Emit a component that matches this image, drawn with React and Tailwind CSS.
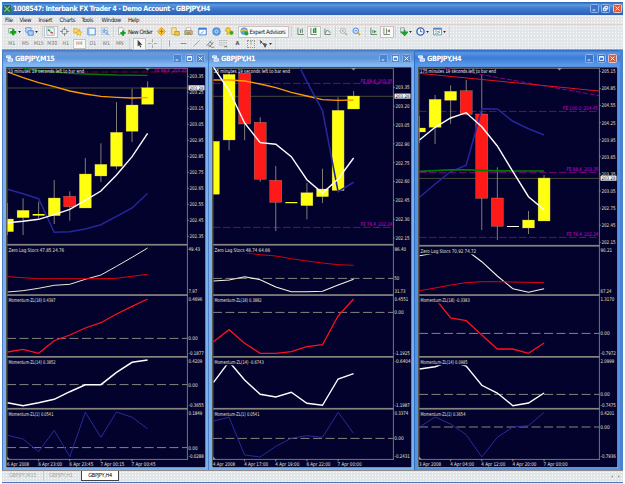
import React from 'react';

const STEP = 15.57;
const barX = (i) => 1.5 + i * STEP;

// candle: [high, low, bodyTop, bodyBottom, color]
const Y = '#ffff10';
const R = '#ff1a1a';
const W = '#ffffff';

const charts = [
  {
    title: 'GBPJPY,M15',
    active: false,
    timer: '10 minutes 19 seconds left to bar end',
    price: 88,
    ticks: ['203.35', '203.25', '203.15', '203.05', '202.95', '202.85', '202.75', '202.65', '202.55', '202.45', '202.35'],
    tickStart: 76.3,
    tickStep: 16,
    dividers: [244.7, 295, 356.8, 408.7],
    levels: [{ y: 72, label: 'FE 88.6_203.35', labelY: 70, from: 75, color: '#9a0010' }],
    candles: [
      [203, 235, 219, 231.7, Y], [198.3, 235, 210.3, 217.7, Y], [201.7, 218.3, 214, 215.6, Y],
      [180, 224, 198, 215.7, Y], [191.3, 220.7, 196.3, 206.7, R], [158, 208, 174, 208, Y],
      [143.3, 182, 164.3, 176, Y], [102, 169.3, 132.3, 166.3, Y], [88.7, 142, 105, 131.3, Y],
      [81.3, 104.3, 87.7, 104.3, Y],
    ],
    lines: [
      { color: '#007800', width: 1.3, pts: [[1, 68.3], [2, 70.5], [4, 73.3], [5, 74], [7, 75], [9, 75.3]] },
      { color: '#ff9a00', width: 1.3, ys: [72, 77.7, 82.7, 86.7, 91, 94, 96.3, 97.3, 98, 97.7] },
      { color: '#26269a', width: 1.5, ys: [189.3, 193.7, 198.7, 232.3, 231.7, 229, 224.7, 216.3, 208, 193.3] },
      { color: '#ffffff', width: 1.4, ys: [222.7, 221.3, 219.3, 214.7, 209.3, 200.3, 191, 175, 156.7, 133.3] },
    ],
    panels: [
      {
        label: 'Zero Lag Stocs 47.85 24.76', y: 250.3, hi: ['49.43', 249], lo: ['7.97', 291],
        lines: [
          { color: '#e9e9d6', width: 1, ys: [292, 290.7, 288.3, 285.3, 284.3, 279.3, 275, 266.3, 257.3, 248] },
          { color: '#e00010', width: 1, ys: [276.7, 277.7, 278.7, 278.7, 278.7, 278.7, 278.7, 278.3, 276.3, 274.3] },
        ],
      },
      {
        label: 'Momentum-ZL(18) 0.4397', y: 300.3, hi: ['0.4696', 298.7], lo: ['-0.1877', 353.5], zero: 338.4,
        lines: [{ color: '#ff1020', width: 1.3, ys: [352, 349.3, 353.3, 340.7, 335, 328, 322.7, 314, 306.3, 299] }],
      },
      {
        label: 'Momentum-ZL(14) 0.3852', y: 362.3, hi: ['0.4209', 361], lo: ['-0.3655', 405], zero: 384.6,
        lines: [{ color: '#ffffff', width: 1.5, ys: [402.7, 405.7, 402.7, 399.3, 391.7, 384.7, 384.7, 372.3, 362.3, 360] }],
      },
      {
        label: 'Momentum-ZL(1) 0.0541', y: 413.8, hi: ['0.1849', 412.7], lo: ['-0.0288', 456.5], zero: 447.6,
        lines: [{ color: '#2a2a9c', width: 1, ys: [435.3, 439, 451.7, 430.3, 456.7, 412.3, 437.3, 412, 417.3, 428.7] }],
      },
    ],
    times: ['6 Apr 2008', '6 Apr 23:00', '6 Apr 23:45', '7 Apr 00:15', '7 Apr 00:45'],
  },
  {
    title: 'GBPJPY,H1',
    active: false,
    timer: '25 minutes 19 seconds left to bar end',
    price: 96.3,
    ticks: ['203.35', '203.20', '203.05', '202.90', '202.75', '202.60', '202.45', '202.30', '202.15'],
    tickStart: 87.3,
    tickStep: 18.83,
    dividers: [244.7, 295, 356.8, 408.7],
    levels: [
      { y: 83.4, label: 'FE 88.6_203.35', labelY: 81, from: 1, color: '#8a008a' },
      { y: 227.4, label: 'FE 76.4_202.24', labelY: 224.4, from: 1, color: '#8a008a' },
    ],
    candles: [
      [141, 194, 141.3, 194.3, Y], [72, 150.3, 74.3, 140, Y], [73, 140.3, 73.3, 124, R],
      [117.3, 181.7, 122.3, 179.3, R], [166, 231, 180.3, 202.3, R], [202, 203, 202, 203.2, Y],
      [183, 219.3, 192.7, 205.7, Y], [168.7, 203, 189, 196.7, Y], [97.3, 191, 110.3, 190.5, Y],
      [91, 109, 96, 109, Y],
    ],
    lines: [
      { color: '#ff9a00', width: 1.3, ys: [80, 80, 81, 84, 87.7, 92.3, 96, 99.7, 100.3, 100] },
      { color: '#26269a', width: 1.6, pts: [[5.56, 68], [6, 81.7], [7, 110.7], [8, 191.7], [9, 182.3]] },
      { color: '#ffffff', width: 1.4, ys: [67.3, 90.7, 123, 142.7, 144.3, 156.7, 179.7, 193, 179, 158] },
    ],
    panels: [
      {
        label: 'Zero Lag Stocs 48.74 64.66', y: 250.3, hi: ['86.40', 249], lo: ['31.73', 291], zero: 278.4, zeroLabel: '50',
        lines: [
          { color: '#d8000c', width: 1, ys: [248, 250.5, 252.7, 254.7, 256, 258.7, 261, 263, 264.7, 265.3] },
          { color: '#f4f4e0', width: 1.1, ys: [281, 280, 276.7, 279.7, 287, 291.7, 291.7, 291.3, 285, 279.3] },
        ],
      },
      {
        label: 'Momentum-ZL(18) 0.3882', y: 300.3, hi: ['0.4551', 298.7], lo: ['-1.1925', 353.5], zero: 312.4,
        lines: [{ color: '#ff1020', width: 1.3, ys: [341.7, 329.7, 343.3, 353.3, 353.3, 351.7, 346.7, 344.7, 316, 299] }],
      },
      {
        label: 'Momentum-ZL(14) -0.6743', y: 362.3, hi: ['-0.6404', 361], lo: ['-1.1987', 405],
        lines: [{ color: '#ffffff', width: 1.4, ys: [382.3, 361.7, 380, 394.3, 397, 392.3, 403.3, 405.3, 379, 373.7] }],
      },
      {
        label: 'Momentum-ZL(1) 0.0541', y: 413.8, hi: ['0.3374', 412.7], lo: ['-0.2431', 456.5], zero: 438.4,
        lines: [{ color: '#2a2a9c', width: 1, ys: [421, 417.3, 455, 457, 446.3, 438.3, 435.7, 437.3, 412.3, 433.3] }],
      },
    ],
    times: ['4 Apr 2008', '4 Apr 17:00', '4 Apr 19:00', '6 Apr 22:00', '7 Apr 00:00'],
  },
  {
    title: 'GBPJPY,H4',
    active: true,
    timer: '175 minutes 19 seconds left to bar end',
    price: 178.4,
    ticks: ['205.15', '204.85', '204.55', '204.25', '203.95', '203.65', '203.35', '203.05', '202.75', '202.45', '202.15'],
    tickStart: 71.3,
    tickStep: 17.1,
    dividers: [245.7, 295, 356.8, 408.7],
    levels: [
      { y: 111.4, label: 'FE 100.0_204.45', labelY: 108.4, from: 1, color: '#8a008a' },
      { y: 172.4, label: 'FE 88.6_203.35', labelY: 169.4, from: 1, color: '#8a008a' },
      { y: 237.4, label: 'FE 76.4_202.24', labelY: 234.4, from: 1, color: '#8a008a' },
    ],
    trends: [
      { from: [27, 68], to: [181, 95.7], color: '#8a008a', dash: '5 2' },
      { from: [1, 73.3], to: [181, 91], color: '#e8101c' },
    ],
    candles: [
      [116, 143, 128, 132, Y], [95, 144, 99.3, 127.3, Y], [85.3, 123.7, 91.3, 100.3, Y],
      [80, 115, 90.7, 114.3, R], [74.3, 230, 114, 198.3, R], [167.3, 240, 198, 226.3, R],
      [226, 227, 226, 227, W], [211, 234, 220, 228, Y], [175, 221, 178, 221, Y],
    ],
    lines: [
      { color: '#26269a', width: 1.5, ys: [197.3, 184, 171.7, 165.3, 108.7, 109, 121.3, 128.7, 135] },
      { color: '#007a00', width: 1.7, ys: [171.3, 170.6, 169.9, 169.9, 170.3, 170.8, 171, 171, 171] },
      { color: '#ffffff', width: 1.4, ys: [140, 127.3, 118, 112.7, 126.7, 146, 171.7, 196.7, 209.7] },
    ],
    panels: [
      {
        label: 'Zero Lag Stocs 70.92 74.72', y: 251.3, hi: ['90.21', 250], lo: ['67.24', 291],
        lines: [
          { color: '#f4f4e0', width: 1.1, ys: [255.7, 253, 251, 250, 261.7, 276, 288.7, 292.3, 288.7] },
          { color: '#e80014', width: 1, ys: [290.7, 288, 285, 282.7, 281.7, 281.7, 282, 282.3, 282.7] },
        ],
      },
      {
        label: 'Momentum-ZL(18) -0.3383', y: 300.3, hi: ['1.3170', 298.7], lo: ['-0.7972', 353.5], zero: 333.4,
        lines: [{ color: '#ff1020', width: 1.3, ys: [301, 298.5, 318, 320.7, 335, 349, 349, 353.3, 343] }],
      },
      {
        label: 'Momentum-ZL(14) 0.0985', y: 362.3, hi: ['2.0999', 361], lo: ['-0.7475', 405], zero: 394.4,
        lines: [{ color: '#ffffff', width: 1.4, ys: [369, 366.7, 361, 366, 385.3, 393, 405.7, 403, 393] }],
      },
      {
        label: 'Momentum-ZL(1) 0.3654', y: 413.8, hi: ['0.4201', 412.7], lo: ['-0.7936', 456.5], zero: 427,
        lines: [{ color: '#2a2a9c', width: 1, ys: [427, 417, 424, 434.7, 457, 437.3, 427, 425.7, 412.3] }],
      },
    ],
    times: ['3 Apr 2008', '4 Apr 04:00', '4 Apr 12:00', '4 Apr 20:00', '7 Apr 00:00'],
  },
];

const toPoints = (l) =>
  (l.pts || l.ys.map((y, i) => [i, y])).map(([i, y]) => `${barX(i).toFixed(1)},${y}`).join(' ');

function Txt({ x, y, w, fill = '#e4e4d8', size = 5.2, children }) {
  return (
    <text x={x} y={y + 1.9} fontSize={size} fill={fill} textLength={w} lengthAdjust="spacingAndGlyphs">
      {children}
    </text>
  );
}

// y coordinates are in window space, the viewBox starts below the caption
function Chart({ c }) {
  return (
    <svg
      width="200"
      height="401"
      viewBox="0 67 200 401"
      className="block bg-[#02022c] font-['DejaVu_Sans_Condensed','DejaVu_Sans',sans-serif]"
    >
      <rect x="0" y="67" width="200" height="1" fill="#4a4a48" />
      <rect x="0" y="67" width="1" height="401" fill="#55534c" />
      <path d="M1 68.5H181" stroke="#77776f" strokeWidth="0.8" />

      {c.levels.map((l) => (
        <path key={l.y} d={`M${l.from} ${l.y}H181`} stroke={l.color} strokeWidth="0.9" strokeDasharray="7.5 2.5" />
      ))}
      <path d={`M1 ${c.price}H181`} stroke="#5b5b3c" strokeWidth="0.8" />

      {c.candles.map(([hi, lo, top, bottom, color], i) => {
        const left = Math.max(barX(i) - 6, 1);
        return (
          <g key={i}>
            <path d={`M${barX(i)} ${hi}V${lo}`} stroke="#8c8c80" strokeWidth="0.9" />
            <rect
              x={left}
              y={top}
              width={barX(i) + 6 - left}
              height={bottom - top}
              fill={color}
              stroke="#b9a98a"
              strokeWidth={bottom - top > 2 ? 0.3 : 0}
            />
          </g>
        );
      })}

      {(c.trends || []).map((t, i) => (
        <path key={i} d={`M${t.from}L${t.to}`} stroke={t.color} strokeWidth="1" strokeDasharray={t.dash} />
      ))}
      {c.lines.map((l, i) => (
        <polyline key={i} points={toPoints(l)} fill="none" stroke={l.color} strokeWidth={l.width} />
      ))}
      {c.levels.map((l) => (
        <Txt key={l.y} x={l.label.length > 14 ? 145 : 148.5} y={l.labelY} w={l.label.length > 14 ? 35 : 32} fill="#d800d8">
          {l.label}
        </Txt>
      ))}
      <Txt x="2" y={71} w="76" fill="#f2f2e8">{c.timer}</Txt>
      <path d="M139 68h5l-2.5 2.6z" fill="#8296a8" />

      {c.panels.map((p) => (
        <g key={p.label}>
          {p.zero && <path d={`M1 ${p.zero}H181`} stroke="#85857c" strokeWidth="1" strokeDasharray="9 3.5" />}
          {p.lines.map((l, i) => (
            <polyline key={i} points={toPoints(l)} fill="none" stroke={l.color} strokeWidth={l.width} />
          ))}
          <rect x="2" y={p.y - 3} width={p.label.length * 2.25} height="6" fill="#02022c" />
          <Txt x="2.5" y={p.y} w={p.label.length * 2.14}>{p.label}</Txt>
          <Txt x="182.5" y={p.hi[1]} w={p.hi[0].length * 2.3}>{p.hi[0]}</Txt>
          <Txt x="182.5" y={p.lo[1]} w={p.lo[0].length * 2.2}>{p.lo[0]}</Txt>
          {p.zero && <Txt x="182.3" y={p.zero} w={p.zeroLabel ? 5 : 9.5}>{p.zeroLabel || '0.00'}</Txt>}
        </g>
      ))}

      {c.dividers.map((y) => (
        <rect key={y} x="1" y={y - 0.8} width="180.5" height="1.7" fill="#85857f" />
      ))}
      <path d="M181.4 68V459.4M1 459.4H182" stroke="#85857f" strokeWidth="0.9" fill="none" />
      <path d="M1.3 68V459" stroke="#5e5e58" strokeWidth="0.6" />

      {c.ticks.map((t, i) => {
        const y = c.tickStart + i * c.tickStep;
        return (
          <g key={t}>
            <path d={`M181 ${y}h2`} stroke="#85857f" strokeWidth="0.8" />
            <Txt x="183.5" y={y} w="14">{t}</Txt>
          </g>
        );
      })}
      <rect x="182.5" y={c.price - 2.7} width="16" height="5" fill="#f4f4f4" />
      <Txt x="183.5" y={c.price} w="14" size={4.8} fill="#111">203.28</Txt>

      {c.times.map((t, i) => (
        <g key={t}>
          {i > 0 && <path d={`M${barX(i * 2)} 459v2.4`} stroke="#a0a098" strokeWidth="0.8" />}
          <Txt x={i === 0 ? 1 : barX(i * 2) - 0.5} y={464.2} w={i === 0 ? 22 : 24}>{t}</Txt>
        </g>
      ))}
      <path d="M1 456.5v3h3z" fill="#8296a8" />
      <path d="M0 467.6H200M199.7 67V468" stroke="#d5dcec" strokeWidth="0.7" />
    </svg>
  );
}

const captionGlyphs = {
  min: 'M2 6.5h3.5',
  max: 'M1.8 2h5.4v5H1.8zM1.8 2.8h5.4',
  restore: 'M3.6 1.8h3.8v3.4H3.6zM1.8 3.8h3.6v3.4H1.8z',
  close: 'M2 2l5 5M7 2l-5 5',
};

function CaptionButton({ kind, red, soft }) {
  return (
    <span
      className={`w-[9px] h-[9px] rounded-[1.5px] border-[0.5px] ${
        red ? 'bg-[#dd5a3c] border-[#e9c3c4]' : soft ? 'bg-[#4a83d2] border-[#86b2ea]' : 'bg-[#3874cf] border-[#8fb6ec]'
      }`}
    >
      <svg viewBox="0 0 9 9" className="block w-full h-full">
        <path d={captionGlyphs[kind]} stroke="#fff" strokeWidth="1.2" fill="none" />
      </svg>
    </span>
  );
}

function ChartWindow({ c }) {
  return (
    <section
      className={`w-[206px] h-[420px] pl-[3px] pr-[2px] border-l rounded-t-[3px] shrink-0 ${
        c.active
          ? 'border-[#2f6cc4] bg-[linear-gradient(#2a68c4_0,#5795e4_3px,#3a7cd6_8px,#5a98ea_15px,#5592e2_17px)]'
          : 'border-[#4c80c6] bg-[linear-gradient(#4577bf_0,#689bdc_3px,#5c93da_8px,#84b9f2_15px,#7ab0ec_17px)]'
      }`}
    >
      <header className="h-[17px] flex items-center pr-[1px]">
        <svg viewBox="0 0 8 8" className="w-[7px] h-[7px] mr-[2px]">
          <path d="M0.6 1h4.6v2H0.6zM2.4 4.2h5v2.8h-5z" fill="#9fc5f5" stroke="#fff" strokeWidth="1" />
        </svg>
        <h2 className="flex-1 text-[7.2px] leading-none font-bold text-white font-['DejaVu_Sans_Condensed',sans-serif] tracking-[-0.42px]">
          {c.title}
        </h2>
        <span className="flex gap-[2.5px]">
          <CaptionButton kind="min" soft={!c.active} />
          <CaptionButton kind="max" soft={!c.active} />
          <CaptionButton kind="close" soft={!c.active} red={c.active} />
        </span>
      </header>
      <div className="h-[401px]">
        <Chart c={c} />
      </div>
    </section>
  );
}

// toolbar drawings on a 12x12 grid
const icons = {
  newChart: <><path d="M1 2h6v6H1z" fill="#e8f4e8" stroke="#6a8a6a" strokeWidth=".8" /><path d="M7 3v8M3 7h8" stroke="#14a014" strokeWidth="3.2" /></>,
  profiles: <><path d="M1 1h7v6H1z" fill="#cfe2fa" stroke="#4d86cf" /><path d="M4 5h7v6H4z" fill="#a9cdf6" stroke="#3b74c0" /></>,
  market: <><path d="M1 1h10v10H1z" fill="#eef5f5" stroke="#6fa0c8" strokeWidth=".9" /><path d="M2.5 3.5l3 2" stroke="#1c9a38" strokeWidth="2" /><path d="M6 6.5l3 2" stroke="#d83a28" strokeWidth="2" /></>,
  target: <path d="M6 0v4M6 8v4M0 6h4M8 6h4M6 2.5a3.5 3.5 0 100 7 3.5 3.5 0 000-7z" fill="none" stroke="#777" />,
  favorites: <><path d="M1 2h4l1 1.5h3V8H1z" fill="#f7d871" stroke="#c8962b" strokeWidth=".8" /><path d="M8 4l1.2 2.4 2.6.4-1.9 1.8.5 2.6L8 10l-2.4 1.2.5-2.6L4.2 6.8l2.6-.4z" fill="#ffe14a" stroke="#c8962b" strokeWidth=".7" /></>,
  navigator: <><path d="M1 1.5h10v9H1z" fill="#f2f8ff" stroke="#3f7fd0" strokeWidth="1.1" /><path d="M2 3v7" stroke="#8ab8ee" strokeWidth="2.5" /></>,
  tester: <><path d="M1 1h8v9H1z" fill="#e4eefa" stroke="#9ab4d0" strokeWidth=".8" /><path d="M3 3v5M5 2v4M7 8l4 3" stroke="#5b86bd" /><circle cx="6.5" cy="6.5" r="2" fill="none" stroke="#6a95cb" /></>,
  order: <><path d="M2 1h5l2 2v7H2z" fill="#fff" stroke="#888" strokeWidth=".8" /><path d="M8 4.5v7M4.5 8h7" stroke="#16a316" strokeWidth="2.8" /></>,
  alert: <><path d="M6 .5L11.5 6 6 11.5.5 6z" fill="#fbc531" stroke="#c98a14" strokeWidth=".9" /><path d="M6 3v6M3.5 6h5" stroke="#a8701a" strokeWidth="1.1" /></>,
  book: <><path d="M1 1h6v9H1z" fill="#f8e49a" stroke="#c4a02d" strokeWidth=".9" /><path d="M5 6h6v5H5z" fill="#f3c93c" stroke="#a5852a" strokeWidth=".9" /></>,
  printer: <><path d="M3 1h6v4H3z" fill="#fff" stroke="#999" strokeWidth=".8" /><path d="M1 5h10v5H1z" fill="#d8c57a" stroke="#86774a" strokeWidth=".9" /><path d="M3 8h6" stroke="#555" /></>,
  full: <><path d="M1 1.5h10v9H1z" fill="#fff" stroke="#2f6fce" strokeWidth="1.1" /><path d="M1 2.5h10" stroke="#2f6fce" strokeWidth="2" /><path d="M3.5 9l4-3.5" stroke="#2f6fce" /></>,
  globe: <><circle cx="6" cy="6" r="5.2" fill="#5e9be2" stroke="#3a75c0" strokeWidth=".6" /><circle cx="6" cy="6" r="2" fill="none" stroke="#d5e8fc" strokeWidth="1.1" /></>,
  coins: <><circle cx="4" cy="4" r="3.3" fill="#fbd037" stroke="#b98b14" strokeWidth=".8" /><circle cx="8.5" cy="7.8" r="3" fill="#2ba53a" stroke="#fbd037" /><circle cx="3.5" cy="9" r="1.8" fill="#e8b92a" /></>,
  expert: <><circle cx="5.5" cy="5.5" r="4.6" fill="#5aa7e2" stroke="#4580b5" strokeWidth=".6" /><path d="M1 5.500l4.500-2L10 5.500" stroke="#f0c43a" strokeWidth="2" fill="none" /><circle cx="8.5" cy="8.5" r="2.8" fill="#25a433" /></>,
  bars: <path d="M2.5 1v9M2.5 10h8M6 3v5M8.5 2v6M6 4h1" stroke="#4f6b50" fill="none" />,
  candles: <><path d="M2.5 1v9M2.5 10h8" stroke="#4f6b50" fill="none" /><path d="M6 2v6" stroke="#2b8d36" strokeWidth="1.5" /><path d="M8.5 1v7" stroke="#18a428" strokeWidth="2.6" /></>,
  line: <path d="M2.5 2v8h8M3 8l2.500-4 2 1L10 8" stroke="#54705a" fill="none" />,
  zoomIn: <><circle cx="5" cy="5" r="3.6" fill="#edf0ee" stroke="#a3a89f" /><path d="M3.3 5h3.4M5 3.3v3.4" stroke="#a3a89f" /><path d="M7.8 7.8l3 3" stroke="#c4b585" strokeWidth="2" /></>,
  zoomOut: <><circle cx="5" cy="5" r="3.7" fill="#d9ecff" stroke="#3e7fd4" strokeWidth="1.2" /><path d="M3.3 5h3.4" stroke="#3366bb" /><path d="M7.8 7.8l3 3" stroke="#d9a92e" strokeWidth="2.2" /></>,
  autoScroll: <><path d="M2.5 1v9h8M5 4v4" stroke="#4f6b50" fill="none" /><path d="M6.5 4l3.500 2.200-3.500 2.200z" fill="#18a428" /></>,
  shift: <><path d="M2.5 1v9h8M6 2v7" stroke="#4f6b50" fill="none" /><path d="M10.5 3L7 5.200l3.500 2.200z" fill="#b84a3c" /></>,
  indicators: <><path d="M2 1h5v7H2z" fill="#dde8dd" stroke="#789" strokeWidth=".8" /><path d="M7.5 3.5v6M4 7l3.500 4L11 7z" stroke="#17a325" strokeWidth="2" fill="#17a325" /></>,
  clock: <><circle cx="6" cy="6" r="4.8" fill="#f4f9ff" stroke="#2c63bd" strokeWidth="1.8" /><path d="M6 3v3.300h2.500" stroke="#444" fill="none" /></>,
  template: <><path d="M.8 1.5h10.500v9H.8z" fill="#fff" stroke="#3f7fd0" strokeWidth="1" /><path d="M.8 2.5h10.500" stroke="#3f7fd0" strokeWidth="2" /><path d="M2.5 6l2-1 2 1.500 3-1.500" stroke="#d0553c" fill="none" /><path d="M2.5 9l2-1 2 .5 3-1.500" stroke="#2ba53a" fill="none" /></>,
  cursor: <path d="M3.5 1v9l2-2 1.500 3.200 1.400-.7L7 7.500h2.800z" fill="#444" />,
  cross: <path d="M6 0v4.500M6 7.500V12M0 6h4.500M7.500 6H12" stroke="#999" />,
  vline: <path d="M6 2v8" stroke="#999" strokeWidth="1.2" />,
  hline: <path d="M2 6h8" stroke="#888" strokeWidth="1.2" />,
  trend: <path d="M2 10l8-8" stroke="#999" strokeWidth="1.2" />,
  fib: <path d="M1 9l6-7M4 11l6-7M2 7.500l5 3M5 4l4 3M7 11h4" stroke="#777" strokeWidth="1.1" fill="none" />,
  channel: <><path d="M0 2h11M0 5h11M0 8h7" stroke="#999" strokeDasharray="1.5 .8" /><path d="M7 9h4v2H7z" fill="#888" /></>,
  arrows: <path d="M1 2l3 2-2 2M3 4l4 4M6 6l4 1-2 4z" stroke="#555" strokeWidth="1.3" fill="#555" />,
};

function Icon({ name }) {
  return (
    <svg viewBox="0 0 12 12" className="w-[9px] h-[9px] shrink-0">
      {icons[name]}
    </svg>
  );
}

const pressedBox = 'border-[0.5px] border-[#c3c5c6] bg-[#f8f8f6]';

function Tool({ name, pressed }) {
  return (
    <span className={`w-[13.6px] h-[12px] shrink-0 flex items-center justify-center ${pressed ? pressedBox : ''}`}>
      <Icon name={name} />
    </span>
  );
}

function DropTool({ name }) {
  return (
    <span className="w-[17px] shrink-0 flex items-center gap-[1px] pl-[1px]">
      <Icon name={name} />
      <svg viewBox="0 0 4 3" className="w-[3px] h-[2px]">
        <path d="M0 0h4L2 3z" fill="#222" />
      </svg>
    </span>
  );
}

function Sep({ className }) {
  return (
    <span className={`h-[11px] shrink-0 flex justify-center ${className}`}>
      <span className="w-px h-full bg-[#d6d2cf]" />
    </span>
  );
}

const dither = 'bg-[#e2e6e9] bg-[radial-gradient(#fbfcfc_0.6px,transparent_0.9px)] bg-[size:3px_3px]';

const menu = [
  ['File', 'w-[14.5px]'], ['View', 'w-[19px]'], ['Insert', 'w-[21px]'], ['Charts', 'w-[22px]'],
  ['Tools', 'w-[20px]'], ['Window', 'w-[26.5px]'], ['Help', 'w-[20px]'],
];
const timeframes = ['M1', 'M5', 'M15', 'M30', 'H1', 'H4', 'D1', 'W1', 'MN'];

export default function App() {
  return (
    <div className="w-[625px] h-[484px] overflow-hidden bg-white pl-[2px] pt-[2px] text-[#222] font-['DejaVu_Sans_Condensed','DejaVu_Sans',sans-serif]">
      <div className="w-[620.5px] h-[482px] flex flex-col bg-[#e4e7ea]">
        <header className="h-[13px] shrink-0 flex items-center pl-[1px] pr-[1px] bg-[linear-gradient(#2b62b4_0,#5c9ae0_3px,#3f7ccc_6px,#2c5fb6_13px)]">
          <svg viewBox="0 0 12 12" className="w-[8px] h-[8px] mr-[2px]">
            <path d="M0 0h12v12H0z" fill="#2c6d5c" />
            <path d="M2 2l8 8M10 2l-8 8" stroke="#7fd67c" strokeWidth="1.8" />
          </svg>
          <h1 className="flex-1 text-[7.2px] leading-none font-bold text-white tracking-[-0.42px] whitespace-nowrap">
            1008547: Interbank FX Trader 4 - Demo Account - GBPJPY,H4
          </h1>
          <span className="flex gap-[2.3px]">
            <CaptionButton kind="min" />
            <CaptionButton kind="restore" />
            <CaptionButton kind="close" red />
          </span>
        </header>

        <nav className={`h-[9px] shrink-0 flex items-center pl-[3px] text-[6px] leading-none tracking-[-0.3px] ${dither}`}>
          {menu.map(([label, width]) => (
            <span key={label} className={width}>{label}</span>
          ))}
        </nav>

        <div className={`h-[14px] shrink-0 flex items-center pl-[5px] border-t-[0.5px] border-[#e0cfca] text-[6px] leading-none ${dither}`}>
          <DropTool name="newChart" />
          <DropTool name="profiles" />
          <Sep className="w-[3px]" />
          <Tool name="market" pressed />
          <Tool name="target" />
          <Tool name="favorites" />
          <Tool name="navigator" />
          <Tool name="tester" />
          <Sep className="w-[4px]" />
          <span className="w-[39px] shrink-0 flex items-center gap-[2px] pl-[1px] tracking-[-0.5px] whitespace-nowrap">
            <Icon name="order" />
            New Order
          </span>
          <Tool name="alert" />
          <Tool name="book" />
          <Tool name="printer" />
          <Tool name="full" />
          <Tool name="globe" />
          <Tool name="coins" />
          <span className={`ml-[1px] w-[51px] h-[12px] shrink-0 flex items-center gap-[1px] pl-[1px] tracking-[-0.42px] whitespace-nowrap ${pressedBox}`}>
            <Icon name="expert" />
            Expert Advisors
          </span>
          <Sep className="w-[5px]" />
          <Tool name="bars" />
          <Tool name="candles" pressed />
          <Tool name="line" />
          <Sep className="w-[2px]" />
          <Tool name="zoomIn" />
          <Tool name="zoomOut" />
          <Sep className="w-[3px]" />
          <Tool name="autoScroll" />
          <Tool name="shift" pressed />
          <Sep className="w-[4px]" />
          <DropTool name="indicators" />
          <DropTool name="clock" />
          <DropTool name="template" />
          <Sep className="w-[2px]" />
        </div>

        <div className={`h-[12px] shrink-0 flex items-center pl-[3px] border-b border-[#a59c92] text-[5.3px] leading-none text-[#777] ${dither}`}>
          {timeframes.map((t) => (
            <span
              key={t}
              className={`w-[13.5px] shrink-0 h-[10px] flex items-center justify-center tracking-[-0.1px] ${t === 'H4' ? pressedBox : ''}`}
            >
              {t}
            </span>
          ))}
          <Sep className="w-[6px]" />
          <Tool name="cursor" pressed />
          <Tool name="cross" />
          <Sep className="w-[3px]" />
          <Tool name="vline" />
          <Tool name="hline" />
          <Tool name="trend" />
          <Tool name="fib" />
          <Tool name="channel" />
          <span className="w-[13.5px] shrink-0 text-center text-[5.5px] text-[#555] font-bold">A</span>
          <span className="w-[13.5px] shrink-0 flex justify-center">
            <span className="w-[8px] h-[8px] border border-dotted border-[#999] flex items-center justify-center">T</span>
          </span>
          <DropTool name="arrows" />
          <Sep className="w-[2px]" />
        </div>

        <main className="h-[420px] shrink-0 flex bg-[#4a82cf]">
          {charts.map((c) => (
            <ChartWindow key={c.title} c={c} />
          ))}
        </main>

        <footer className={`h-[12px] shrink-0 flex items-start border-t border-[#8f8b86] text-[5.6px] leading-none tracking-[-0.3px] text-[#aaa8a2] ${dither}`}>
          <span className="w-[42px] h-[10px] flex items-center pl-[7px] border-r border-[#cfcbc6]">GBPJPY,M15</span>
          <span className="w-[37px] h-[10px] flex items-center pl-[5px]">GBPJPY,H1</span>
          <span className="w-[38px] h-[10px] flex items-center justify-center bg-white border border-t-0 border-[#444] text-black">
            GBPJPY,H4
          </span>
          <span className="ml-auto h-[10px] flex items-center gap-[5px] pr-[3px]">
            <svg viewBox="0 0 3 4" className="w-[2px] h-[3px]"><path d="M3 0v4L0 2z" fill="#999" /></svg>
            <svg viewBox="0 0 3 4" className="w-[2px] h-[3px]"><path d="M0 0v4l3-2z" fill="#999" /></svg>
          </span>
        </footer>
        <div className="h-px bg-[#5277b4]" />
      </div>
    </div>
  );
}
